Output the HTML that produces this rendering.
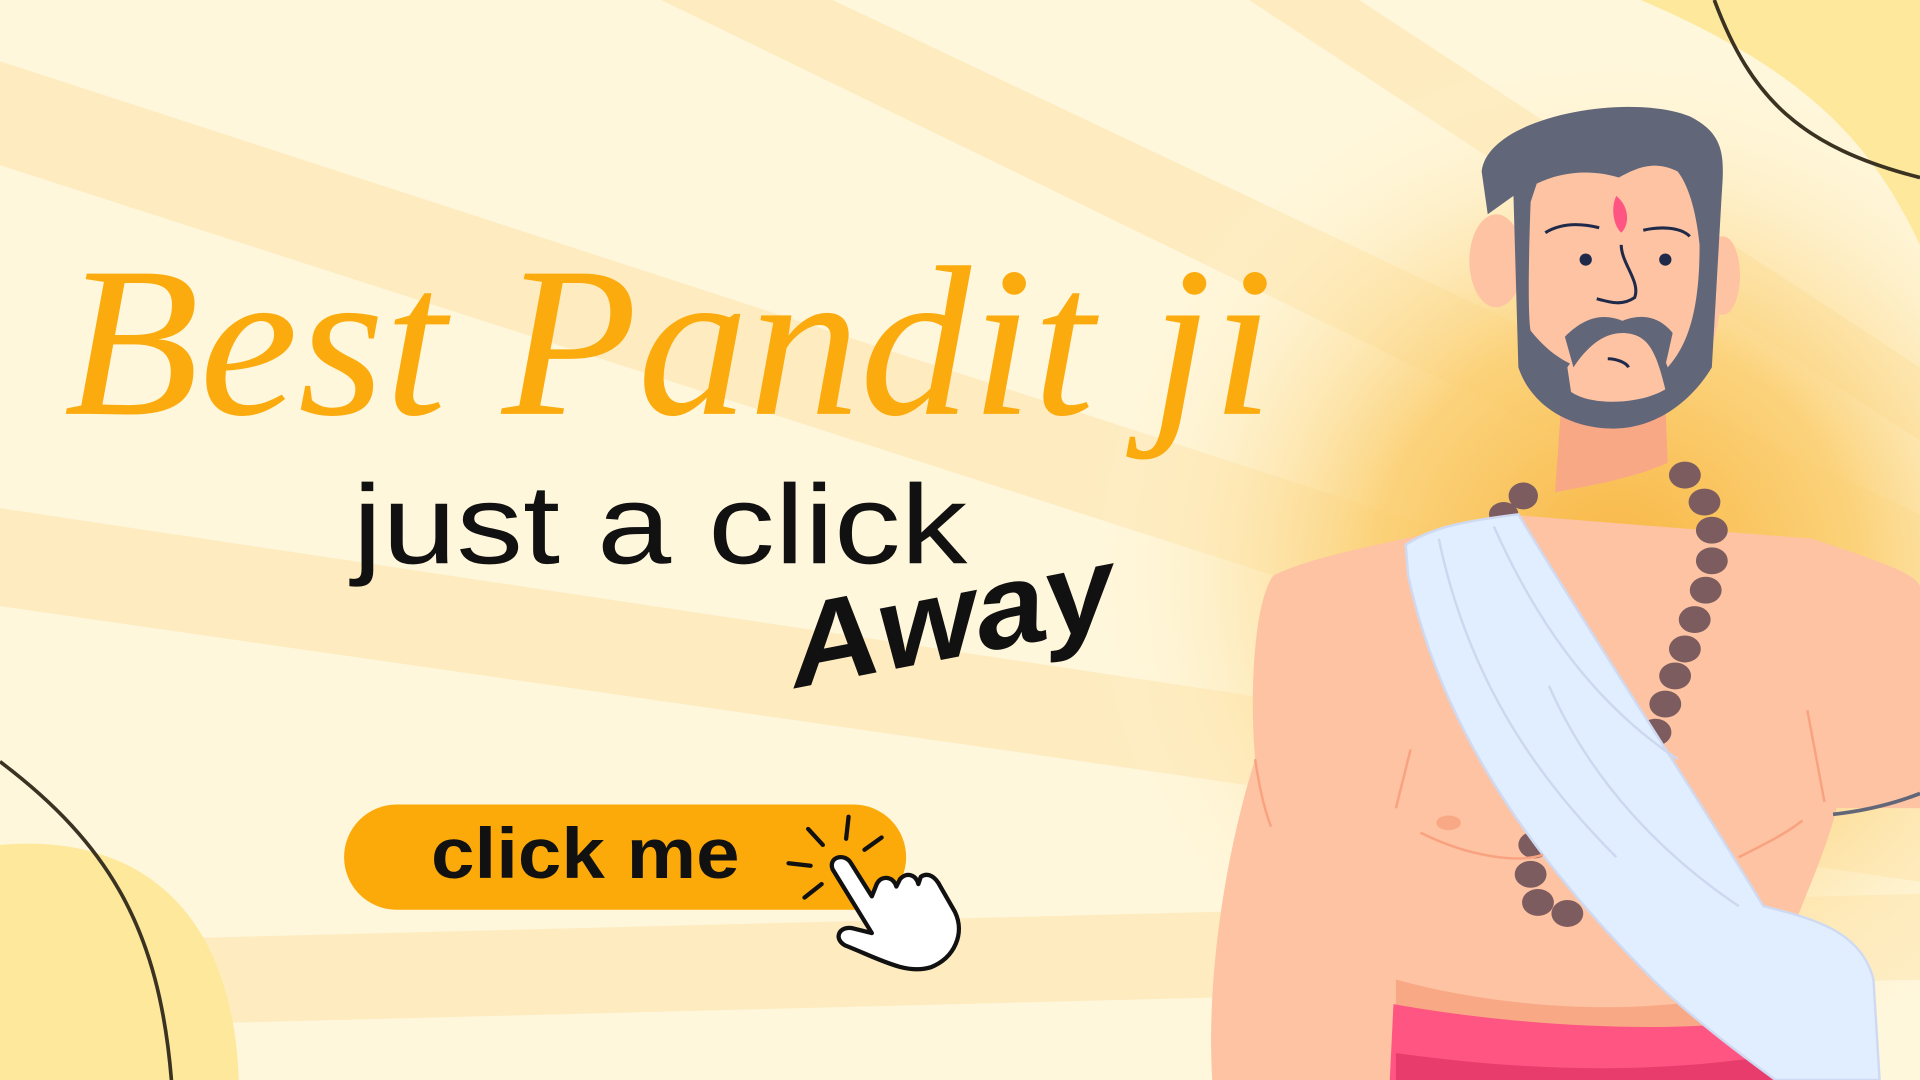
<!DOCTYPE html>
<html><head><meta charset="utf-8"><style>
html,body{margin:0;padding:0;width:1920px;height:1080px;overflow:hidden;background:#fff7dc}
svg{display:block}
</style></head><body>
<svg width="1920" height="1080" viewBox="0 0 1568 882" preserveAspectRatio="none" xmlns="http://www.w3.org/2000/svg">
<defs>
<radialGradient id="glow" cx="1320" cy="470" r="440" gradientUnits="userSpaceOnUse">
<stop offset="0" stop-color="#f8b43f"/><stop offset="0.45" stop-color="#fbcf72" stop-opacity="0.9"/><stop offset="1" stop-color="#fff7dc" stop-opacity="0"/>
</radialGradient>
</defs>
<rect width="1568" height="882" fill="#fff7dc"/>
<g fill="#feecc0">
<polygon points="0,50 1568,560 1568,640 0,135"/>
<polygon points="0,415 1568,650 1568,720 0,495"/>
<polygon points="0,770 1568,730 1568,800 0,840"/>
<polygon points="540,0 680,0 1568,420 1568,500"/>
<polygon points="1020,0 1110,0 1568,300 1568,360"/>
</g>
<rect width="1568" height="882" fill="url(#glow)"/>
<path d="M1340,0 L1568,0 L1568,200 C1530,120 1480,60 1340,0Z" fill="#fde89c"/>
<path d="M1400,0 C1430,80 1470,120 1568,145" fill="none" stroke="#3b3322" stroke-width="3"/>
<path d="M0,690 C110,680 190,740 195,882 L0,882Z" fill="#fde89c"/>
<path d="M0,622 C90,690 130,760 140,882" fill="none" stroke="#3b3322" stroke-width="3"/>
<text x="52" y="338" font-family="Liberation Serif, serif" font-style="italic" font-size="175" fill="#fbab0d" textLength="988" lengthAdjust="spacingAndGlyphs">Best Pandit ji</text>
<text x="288" y="460" font-family="Liberation Sans, sans-serif" font-size="92" fill="#111" textLength="502" lengthAdjust="spacingAndGlyphs">just a click</text>
<text transform="translate(650,562) rotate(-11)" font-family="Liberation Sans, sans-serif" font-weight="bold" font-style="italic" font-size="96" fill="#111" textLength="270" lengthAdjust="spacingAndGlyphs">Away</text>
<rect x="281" y="657" width="459" height="86" rx="43" fill="#fca90a"/>
<text x="352" y="717" font-family="Liberation Sans, sans-serif" font-weight="bold" font-size="58" fill="#111" textLength="252" lengthAdjust="spacingAndGlyphs">click me</text>
<g stroke="#111" stroke-width="3.5" stroke-linecap="round">
<line x1="660" y1="677" x2="672" y2="690"/><line x1="693" y1="667" x2="691" y2="685"/><line x1="720" y1="684" x2="706" y2="694"/>
<line x1="644" y1="705" x2="662" y2="707"/><line x1="657" y1="733" x2="671" y2="722"/>
</g>
<path d="M680,710 C676,700 690,696 695,705 L712,732 L716,722 C720,714 730,716 732,724 L735,718 C740,712 748,714 750,722 L752,716 C758,712 764,716 768,724 L780,745 C788,762 780,782 760,790 C740,796 720,784 690,772 C680,766 686,756 696,758 L712,762 Z" fill="#fff" stroke="#111" stroke-width="3.5" stroke-linejoin="round"/>
<g>
<path d="M1040,470 C1080,450 1160,440 1230,420 L1480,440 C1540,460 1568,470 1568,480 L1568,660 L1500,660 C1490,700 1470,740 1460,770 L1460,882 L990,882 C985,800 1000,700 1025,620 C1020,560 1025,490 1040,470Z" fill="#fdc3a2"/>
<path d="M1275,330 L1360,330 L1362,378 C1330,392 1290,398 1270,402Z" fill="#f9a886"/>
<path d="M1140,800 C1250,830 1380,830 1460,800 L1460,882 L1140,882Z" fill="#f9a886"/>
<path d="M1138,820 C1250,840 1380,845 1460,830 L1460,882 L1135,882Z" fill="#fe5583"/>
<path d="M1140,860 C1250,875 1350,878 1460,860 L1460,882 L1140,882Z" fill="#e83d6c"/>
<g fill="#7d5c5f">
<ellipse cx="1244" cy="405" rx="12" ry="11"/><ellipse cx="1228" cy="420" rx="12" ry="10"/>
<ellipse cx="1376" cy="388" rx="13" ry="11"/><ellipse cx="1392" cy="410" rx="13" ry="11"/><ellipse cx="1398" cy="433" rx="13" ry="11"/>
<ellipse cx="1398" cy="458" rx="13" ry="11"/><ellipse cx="1393" cy="482" rx="13" ry="11"/><ellipse cx="1384" cy="506" rx="13" ry="11"/>
<ellipse cx="1376" cy="530" rx="13" ry="11"/><ellipse cx="1368" cy="552" rx="13" ry="11"/><ellipse cx="1360" cy="575" rx="13" ry="11"/><ellipse cx="1352" cy="598" rx="13" ry="11"/>
<ellipse cx="1253" cy="690" rx="13" ry="11"/><ellipse cx="1250" cy="714" rx="13" ry="11"/><ellipse cx="1256" cy="737" rx="13" ry="11"/><ellipse cx="1280" cy="746" rx="13" ry="11"/>
</g>
<path d="M1148,445 C1170,430 1200,425 1240,420 C1300,520 1380,640 1440,740 C1480,750 1520,760 1530,800 L1535,882 L1450,882 C1420,860 1380,830 1350,800 C1270,720 1180,610 1150,470Z" fill="#e1eeff" stroke="#cfdaf2" stroke-width="2"/>
<g fill="none" stroke="#cdd7ef" stroke-width="2">
<path d="M1175,440 C1200,560 1260,640 1320,700"/><path d="M1220,430 C1260,520 1310,580 1370,620"/><path d="M1265,560 C1300,640 1360,700 1420,740"/>
</g>
<g fill="none" stroke="#f9a280" stroke-width="2">
<path d="M1160,680 C1200,700 1240,705 1260,698"/><path d="M1420,700 C1440,690 1460,680 1472,670"/><path d="M1140,660 L1152,612"/><path d="M1476,580 L1490,655"/><path d="M1025,620 C1028,640 1032,660 1038,675"/>
</g>
<ellipse cx="1183" cy="672" rx="10" ry="6" fill="#f9a886"/>
<path d="M1497,665 C1525,662 1550,655 1568,648" fill="none" stroke="#626679" stroke-width="3"/>
<ellipse cx="1222" cy="213" rx="22" ry="38" fill="#fdc3a2"/>
<ellipse cx="1407" cy="225" rx="14" ry="32" fill="#fdc3a2"/>
<path d="M1238,130 C1260,105 1390,105 1400,140 L1405,250 C1400,300 1370,340 1318,342 C1270,340 1245,300 1240,250Z" fill="#fdc3a2"/>
<path d="M1210,140 C1215,95 1330,75 1380,95 C1410,110 1408,130 1406,160 L1398,300 C1380,330 1350,350 1318,350 C1280,350 1250,330 1240,300 L1236,160 L1215,175 Z M1250,165 C1248,220 1248,260 1250,270 C1262,285 1275,295 1290,300 C1300,270 1310,262 1325,262 C1345,262 1355,280 1362,300 C1380,280 1388,250 1388,200 C1385,170 1378,150 1370,140 C1350,130 1335,138 1322,145 C1300,138 1275,140 1255,150Z" fill="#626679"/>
<path d="M1280,300 C1292,282 1305,272 1325,272 C1345,272 1352,285 1360,318 C1340,330 1300,332 1283,320Z" fill="#fdc3a2"/>
<path d="M1278,275 C1295,258 1310,256 1325,262 C1340,256 1355,258 1366,272 C1362,290 1360,300 1358,305 C1350,280 1340,272 1325,272 C1308,272 1295,285 1285,300 Z" fill="#626679"/>
<path d="M1320,160 C1315,170 1318,185 1324,190 C1330,185 1332,170 1320,160Z" fill="#fe5583"/>
<g fill="none" stroke="#1f2a4a" stroke-width="2.5">
<path d="M1262,190 C1275,182 1290,182 1306,186"/><path d="M1342,188 C1355,185 1372,185 1380,193"/>
<path d="M1324,200 C1324,215 1340,230 1335,243 C1325,250 1315,247 1304,244"/><path d="M1313,293 C1320,293 1328,296 1330,300"/>
</g>
<circle cx="1295" cy="212" r="5" fill="#1f2a4a"/><circle cx="1360" cy="212" r="5" fill="#1f2a4a"/>
</g>
</svg>
</body></html>
